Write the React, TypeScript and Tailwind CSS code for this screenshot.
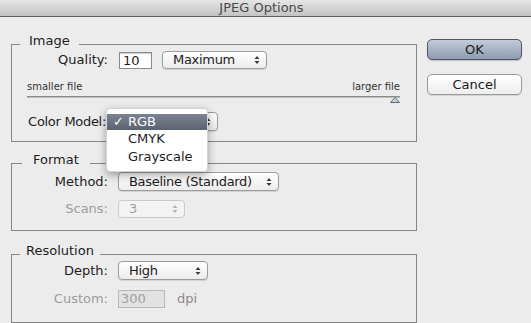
import { ReactNode } from "react"

function Arrows({ dim = false }: { dim?: boolean }) {
    return (
        <svg width="6" height="10" viewBox="0 0 6 10">
            <path d="M3 1L5.5 4H0.5Z M3 9L5.5 6H0.5Z" fill={dim ? "#b4b4b4" : "#3a3a3a"} />
        </svg>
    )
}

function Select({ className, children, dim = false }: { className: string; children: ReactNode; dim?: boolean }) {
    return (
        <div
            className={
                "flex items-center justify-between rounded-[4px] border pl-[10px] pr-[6px] " +
                (dim
                    ? "border-[#c9c9c9] bg-[#f3f3f3] text-[#a0a0a0] "
                    : "border-[#9c9c9c] bg-gradient-to-b from-white to-[#ececec] text-[#1c1c1c] shadow-[0_1px_1px_rgba(0,0,0,0.12)] ") +
                className
            }
        >
            <span className="tracking-[-0.3px]">{children}</span>
            <Arrows dim={dim} />
        </div>
    )
}

function Label({ children, dim = false, className = "" }: { children: ReactNode; dim?: boolean; className?: string }) {
    return (
        <span className={"w-[96px] shrink-0 text-right " + (dim ? "text-[#9c9c9c] " : "text-[#1c1c1c] ") + className}>
            {children}
        </span>
    )
}

export default function App() {
    return (
        <div className="w-[531px] h-[323px] overflow-hidden bg-[#ececec] font-['Lucida_Grande','DejaVu_Sans',sans-serif] text-[13px] leading-[16px] text-[#1c1c1c]">

            {/* title bar */}
            <div className="h-[17px] flex items-center justify-center pr-[8px] bg-gradient-to-b from-[#e6e6e6] to-[#c3c3c3] border-b border-[#5e5e5e] text-[#474747] leading-[16px]">
                JPEG Options
            </div>

            <div className="flex">

                <div className="w-[417px] pl-[11px] flex flex-col">

                    {/* Image */}
                    <fieldset className="mt-[20px] border border-[#868686] h-[105px]">
                        <legend className="ml-[8px] px-[9px] leading-[14px]">
                            <span className="relative -top-[3px]">Image</span>
                        </legend>

                        <div className="flex items-center h-[18px]">
                            <Label>Quality:</Label>
                            <div className="ml-[11px] w-[33px] h-[17px] bg-white border border-[#8a8a8a] shadow-[inset_0_1px_1px_rgba(0,0,0,0.2)] pl-[3px] leading-[15px]">
                                10
                            </div>
                            <Select className="ml-[10px] w-[105px] h-[18px]">Maximum</Select>
                        </div>

                        <div className="mt-[12px] pl-[15px] pr-[16px]">
                            <div className="flex justify-between text-[10px] leading-[12px] text-[#333]">
                                <span>smaller file</span>
                                <span>larger file</span>
                            </div>
                            <div className="mt-[3px] h-[2px] bg-[#8a8a8a] border-b border-[#bdbdbd]" />
                            <div className="flex justify-end -mt-[1px]">
                                <svg width="10" height="6" viewBox="0 0 10 6">
                                    <path d="M5 0.5L9.5 5.5H0.5Z" fill="#c7d0dc" stroke="#5f6a79" strokeWidth="1" />
                                </svg>
                            </div>
                        </div>

                        <div className="mt-[9px] flex items-center h-[19px]">
                            <Label className="pr-[2px] tracking-[-0.3px]">Color Model:</Label>
                            <div className="relative ml-[10px]">
                                <Select className="w-[100px] h-[19px]">RGB</Select>

                                {/* open popup menu */}
                                <div className="absolute -left-[12px] -top-[4px] w-[102px] bg-white rounded-[4px] pt-[5px] pb-[6px] shadow-[0_3px_8px_rgba(0,0,0,0.35)] border border-[#d4d4d4]">
                                    <div className="h-[16px] flex items-center bg-gradient-to-b from-[#7c8392] to-[#5c6270] text-white">
                                        <span className="w-[21px] pl-[6px]">✓</span>
                                        <span>RGB</span>
                                    </div>
                                    <div className="h-[18px] flex items-center pl-[21px]">CMYK</div>
                                    <div className="h-[17px] flex items-center pl-[21px]">Grayscale</div>
                                </div>
                            </div>
                        </div>
                    </fieldset>

                    {/* Format */}
                    <fieldset className="mt-[14px] border border-[#868686] h-[75px]">
                        <legend className="ml-[10px] px-[11px] leading-[14px]">
                            <span className="relative -top-[3px]">Format</span>
                        </legend>

                        <div className="mt-[2px] flex items-center h-[19px]">
                            <Label>Method:</Label>
                            <Select className="ml-[10px] w-[161px] h-[19px]">Baseline (Standard)</Select>
                        </div>
                        <div className="mt-[9px] flex items-center h-[18px]">
                            <Label dim>Scans:</Label>
                            <Select dim className="ml-[10px] w-[67px] h-[18px]">3</Select>
                        </div>
                    </fieldset>

                    {/* Resolution */}
                    <fieldset className="mt-[16px] border border-[#868686] h-[76px]">
                        <legend className="ml-[8px] px-[6px] leading-[14px]">
                            <span className="relative -top-[3px]">Resolution</span>
                        </legend>

                        <div className="flex items-center h-[19px]">
                            <Label>Depth:</Label>
                            <Select className="ml-[10px] w-[90px] h-[19px]">High</Select>
                        </div>
                        <div className="mt-[10px] flex items-center h-[18px]">
                            <Label dim>Custom:</Label>
                            <div className="ml-[10px] w-[47px] h-[18px] bg-[#e2e2e2] border border-[#b9b9b9] pl-[2px] leading-[16px] text-[#a0a0a0]">
                                300
                            </div>
                            <span className="ml-[12px] text-[#8a8a8a]">dpi</span>
                        </div>
                    </fieldset>
                </div>

                {/* buttons */}
                <div className="pl-[10px] pt-[22px] flex flex-col gap-[14px]">
                    <button className="w-[95px] h-[21px] rounded-[5px] border border-[#4f5666] bg-gradient-to-b from-[#c3ccd9] to-[#8d9ab0] shadow-[0_1px_1px_rgba(0,0,0,0.2)] text-[#1a1a1a] leading-[19px]">
                        OK
                    </button>
                    <button className="w-[95px] h-[21px] rounded-[5px] border border-[#9a9a9a] bg-gradient-to-b from-white to-[#ededed] shadow-[0_1px_1px_rgba(0,0,0,0.12)] text-[#1a1a1a] leading-[19px]">
                        Cancel
                    </button>
                </div>
            </div>
        </div>
    )
}
